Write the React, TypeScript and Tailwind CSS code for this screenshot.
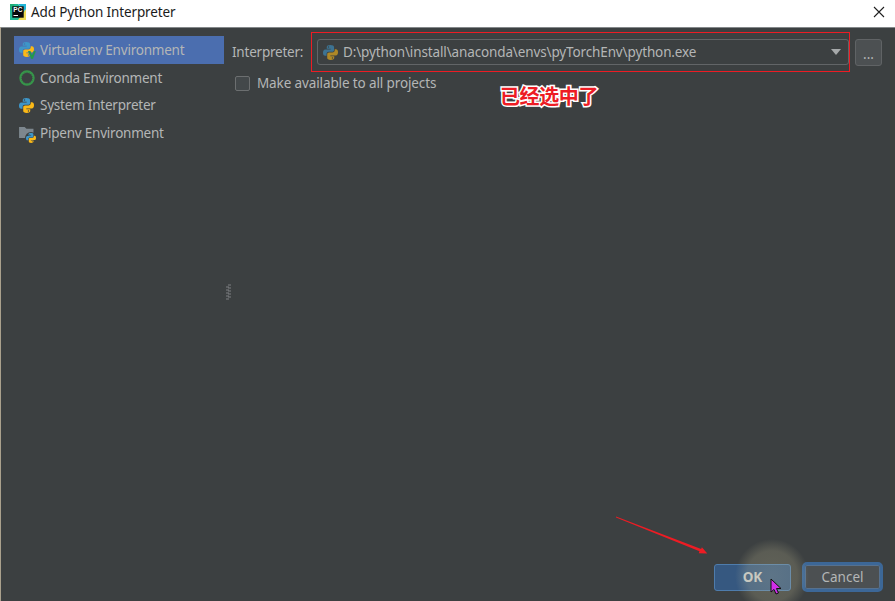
import type { ReactNode } from "react";

function PythonLogo({ className = "" }: { className?: string }) {
  return (
    <svg viewBox="0 0 16 16" className={`shrink-0 ${className}`} aria-hidden="true">
      <path
        fill="#3e96c8"
        d="M7.800 0C5.200 0 4 .8 4 2.300V4h4.200v.8H2.300C.8 4.800 0 6.200 0 8.200s.8 3.300 2.300 3.300h1.500V9.600c0-1.400 1-2.300 2.400-2.300h3.600c1.200 0 2-.8 2-2v-3C11.800.8 10.400 0 7.800 0ZM5.900 1.400a.75.75 0 1 1 0 1.500.75.75 0 0 1 0-1.500Z"
      />
      <path
        fill="#fbb917"
        d="M8.200 16c2.600 0 3.800-.8 3.800-2.300V12H7.800v-.8h5.900c1.500 0 2.300-1.400 2.300-3.400s-.8-3.300-2.300-3.300h-1.200v1.200c0 1.400-1 2.300-2.400 2.300H6.500c-1.200 0-2 .8-2 2v3.700c0 1.500 1.100 2.300 3.700 2.300Zm1.900-1.400a.75.75 0 1 1 0-1.500.75.75 0 0 1 0 1.500Z"
      />
    </svg>
  );
}

function VirtualenvIcon() {
  return (
    <span className="relative block size-4">
      <PythonLogo className="size-[15px]" />
      <svg viewBox="0 0 8 8" className="absolute -right-px -bottom-px size-2">
        <path d="M0 0h2.400L4 4 5.800 0H8L5 8H3Z" fill="#249b48" stroke="#4b6eaf" strokeWidth=".3" />
      </svg>
    </span>
  );
}

function CondaIcon() {
  return (
    <svg viewBox="0 0 16 16" className="size-4">
      <circle cx="8" cy="8" r="6.500" fill="none" stroke="#36954a" strokeWidth="2.400" />
      <circle cx="8" cy="8" r="5.600" fill="none" stroke="#3c4041" strokeWidth=".5" strokeDasharray="1 1.300" />
    </svg>
  );
}

function PipenvIcon() {
  return (
    <span className="relative block size-4">
      <svg viewBox="0 0 16 14" className="mt-px h-[13px] w-[15px]">
        <path d="M0 1h6l2 2h7.500v10H0Z" fill="#7d878e" />
      </svg>
      <span className="absolute -right-0.5 -bottom-0.5 rounded-full bg-[#3c4041] p-px">
        <PythonLogo className="size-[10px]" />
      </span>
    </span>
  );
}

function PyCharmIcon() {
  return (
    <svg viewBox="0 0 16 16" className="size-4">
      <path d="M0 0h8l8 8v8H0Z" fill="#20b993" />
      <path d="M8 0h8v8Z" fill="#22b6d8" />
      <path d="M16 5v11H8Z" fill="#eedc55" />
      <path d="M0 0h5L0 7Z" fill="#20ad77" />
      <path d="M2.300 2.300h11.400v11.400H2.300Z" fill="#08090b" />
      <text x="3.300" y="8.400" fill="#fff" fontSize="6.500" fontWeight="700" fontFamily="Liberation Sans, sans-serif" textLength="9.200">PC</text>
      <path d="M3.500 11h4.500v1H3.500Z" fill="#fff" />
    </svg>
  );
}

function EnvRow({ icon, label, selected = false }: { icon: ReactNode; label: string; selected?: boolean }) {
  return (
    <li className={`flex h-[27.800px] items-center pl-[5px] ${selected ? "bg-[#4b6eaf]" : ""}`}>
      <span className="w-[21px] shrink-0">{icon}</span>
      <span className="whitespace-nowrap tracking-[-0.220px]">{label}</span>
    </li>
  );
}

export default function App() {
  return (
    <div className="relative flex h-[601px] w-[895px] flex-col overflow-hidden bg-[#3c4041] font-['Noto_Sans','Noto_Sans_CJK_SC',sans-serif] text-[13.500px] leading-5 text-[#b4b6b6]">
      <header className="flex h-[27px] shrink-0 items-center bg-white pr-[10px] pb-[3px] pl-[10px] text-[#1b1b1b] shadow-[0_1px_0_#84888a]">
        <PyCharmIcon />
        <h1 className="ml-[5px] text-[13.500px] tracking-[-0.130px]">Add Python Interpreter</h1>
        <svg viewBox="0 0 12 12" className="ml-auto size-3">
          <path d="m1 1 10 10M11 1 1 11" stroke="#202020" strokeWidth="1.100" />
        </svg>
      </header>

      <div className="flex min-h-0 flex-1 border-l border-[#aaa18d]">
        <nav className="ml-[13px] w-[210px] pt-[9px]">
          <ul>
            <EnvRow selected icon={<VirtualenvIcon />} label="Virtualenv Environment" />
            <EnvRow icon={<CondaIcon />} label="Conda Environment" />
            <EnvRow icon={<PythonLogo className="size-[15px]" />} label="System Interpreter" />
            <EnvRow icon={<PipenvIcon />} label="Pipenv Environment" />
          </ul>
        </nav>

        <div className="w-2 pt-[257px] pl-0.5">
          <svg viewBox="0 0 5 16" className="h-4 w-[5px]">
            <path d="M2 1h3M0 3h3M2 4h3M0 6h3M2 7h3M0 9h3M2 10h3M0 12h3M2 13h3M0 15h3" stroke="#999c9d" strokeWidth=".7" />
          </svg>
        </div>

        <main className="flex min-w-0 flex-1 flex-col pt-[5px]">
          <div className="flex items-center">
            <label className="w-[79px] tracking-[-0.220px]">Interpreter:</label>
            <div className="h-[40px] w-[539px] border border-[#ed1c24] py-[6px] pl-[5px]">
              <div className="flex h-[26px] items-center rounded-[3px] border border-[#626567] pr-[7px] pl-[5px]">
                <PythonLogo className="size-[15px] opacity-60" />
                <span className="ml-[5px] tracking-[-0.130px] whitespace-nowrap">D:\python\install\anaconda\envs\pyTorchEnv\python.exe</span>
                <svg viewBox="0 0 10 6" className="ml-auto h-1.5 w-2.5">
                  <path d="M0 0h10L5 6Z" fill="#a6a9aa" />
                </svg>
              </div>
            </div>
            <button className="ml-[5px] flex h-[27px] w-[27px] items-center justify-center rounded-[3px] border border-[#606365] bg-[#4c5052] pt-[3px]">...</button>
          </div>
          <label className="mt-px flex h-5 items-center">
            <span className="ml-[3px] size-[15px] rounded-[2px] border border-[#6c6f70] bg-[#43484a]" />
            <span className="ml-[7px] tracking-[-0.120px]">Make available to all projects</span>
          </label>
          <footer className="mt-auto flex items-center justify-end pr-3 pb-[9px]">
            <button className="h-[27px] w-[77px] rounded-[3px] border border-[#4e7cac] bg-[#365880] text-[13.500px] font-bold text-[#c6c9ca]">OK</button>
            <button className="ml-[11px] h-[30px] w-[81px] rounded-[5px] border-[3px] border-[#3c6797] bg-[#4c5052] shadow-[inset_0_0_0_1px_#56718f]">Cancel</button>
          </footer>
        </main>
      </div>

      <div className="absolute top-[83px] left-[500px] text-[20px] leading-7 font-bold tracking-[-0.400px] text-[#ed1c24] [-webkit-text-stroke:3px_white] [paint-order:stroke_fill]">已经选中了</div>
      <svg viewBox="0 0 94 39" className="absolute top-[516px] left-[615px] h-[39px] w-[94px]">
        <path d="M1 .6 1 1.500 84.500 35.200l-.8 2.100 8.600.1-5.400-6.200-.8 1.800Z" fill="#ed1c24" />
      </svg>
      <div className="absolute top-[539px] left-[735px] size-[74px] rounded-full bg-[radial-gradient(closest-side,#cec69b42_0%,#cec69b36_68%,transparent_100%)]" />
      <svg viewBox="0 0 12 18" className="absolute top-[578px] left-[770px] h-[18px] w-3">
        <path d="M1 1v13l3-2.500 2 4.500 2.500-1-2-4.500h4.500Z" fill="#d02ee9" stroke="#111" strokeWidth="1" />
      </svg>
    </div>
  );
}
